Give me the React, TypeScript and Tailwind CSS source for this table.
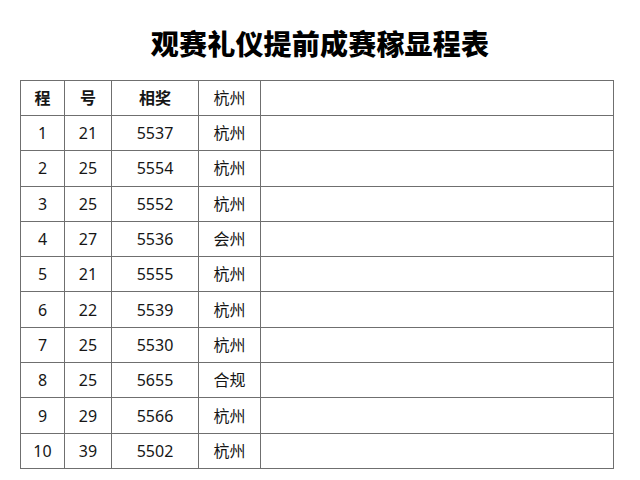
const rows = [
  { no: "1", num: "21", code: "5537", city: "杭州" },
  { no: "2", num: "25", code: "5554", city: "杭州" },
  { no: "3", num: "25", code: "5552", city: "杭州" },
  { no: "4", num: "27", code: "5536", city: "会州" },
  { no: "5", num: "21", code: "5555", city: "杭州" },
  { no: "6", num: "22", code: "5539", city: "杭州" },
  { no: "7", num: "25", code: "5530", city: "杭州" },
  { no: "8", num: "25", code: "5655", city: "合规" },
  { no: "9", num: "29", code: "5566", city: "杭州" },
  { no: "10", num: "39", code: "5502", city: "杭州" },
];

const font = "font-['Noto_Sans','Noto_Sans_CJK_SC',sans-serif]";
const cell = "border border-[#6f6f6f] text-center align-middle p-0";

export default function App() {
  return (
    <div className={`h-[480px] w-[640px] bg-white text-[#161616] ${font}`}>
      <div className="flex h-[80px] items-center justify-center pt-[5px]">
        <h1 className="font-['Noto_Sans_CJK_SC',sans-serif] text-[28px] font-black leading-none tracking-[0.2px] text-black">
          观赛礼仪提前成赛稼显程表
        </h1>
      </div>
      <div className="px-[20px]">
        <table className="w-[594px] table-fixed border-collapse text-[16px]">
          <colgroup>
            <col className="w-[44px]" />
            <col className="w-[47px]" />
            <col className="w-[87px]" />
            <col className="w-[62px]" />
            <col />
          </colgroup>
          <thead>
            <tr className="h-[35px]">
              <th className={`${cell} font-bold`}>程</th>
              <th className={`${cell} font-bold`}>号</th>
              <th className={`${cell} font-bold`}>相奖</th>
              <th className={`${cell} font-normal`}>杭州</th>
              <th className={cell}></th>
            </tr>
          </thead>
          <tbody>
            {rows.map((r) => (
              <tr key={r.no} className="h-[35.3px]">
                <td className={cell}>{r.no}</td>
                <td className={cell}>{r.num}</td>
                <td className={cell}>{r.code}</td>
                <td className={cell}>{r.city}</td>
                <td className={cell}></td>
              </tr>
            ))}
          </tbody>
        </table>
      </div>
    </div>
  );
}
